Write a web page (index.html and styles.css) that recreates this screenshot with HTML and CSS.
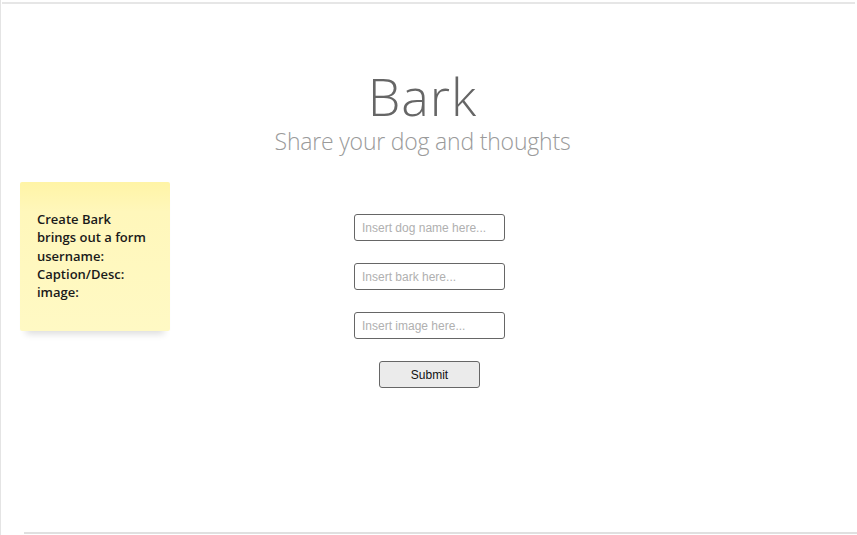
FILE: index.html
```html
<!DOCTYPE html>
<html>
<head>
<meta charset="utf-8">
<link rel="stylesheet" href="styles.css">
</head>
<body>
<div class="frame">
  <div class="note">
    <p>Create Bark<br>brings out a form<br>username:<br>Caption/Desc:<br>image:</p>
  </div>
  <header class="hero">
    <h1 class="title">Bark</h1>
    <p class="subtitle">Share your dog and thoughts</p>
  </header>
  <form class="form">
    <input class="field" type="text" placeholder="Insert dog name here...">
    <input class="field" type="text" placeholder="Insert bark here...">
    <input class="field" type="text" placeholder="Insert image here...">
    <button class="submit" type="button">Submit</button>
  </form>
  <div class="bottom-line"></div>
</div>
</body>
</html>
```

FILE: styles.css
```css
html, body {
  margin: 0;
  padding: 0;
  background: #ffffff;
}
body {
  width: 857px;
  height: 535px;
  overflow: hidden;
  position: relative;
}
.frame {
  position: relative;
  height: 535px;
  border-left: 1px solid #e4e4e4;
  box-sizing: border-box;
}
.frame::before {
  content: "";
  display: block;
  margin-left: 1px;
  margin-right: 2px;
  height: 2px;
  border-top: 2px solid #ffffff;
  background: #e6e6e6;
}
.hero {
  display: flex;
  flex-direction: column;
  align-items: center;
  padding-top: 62px;
  margin-left: -13px;
}
.title {
  margin: 0;
  font-family: "Open Sans", "Lato", sans-serif;
  font-weight: 300;
  font-size: 52px;
  line-height: 60px;
  color: #666666;
  letter-spacing: 1px;
}
.subtitle {
  margin: 0;
  font-family: "Open Sans", "Lato", sans-serif;
  font-weight: 300;
  font-size: 23px;
  line-height: 30px;
  color: #9a9a9a;
  letter-spacing: -0.2px;
}
.form {
  display: flex;
  flex-direction: column;
  align-items: center;
  gap: 22px;
  margin-top: 58px;
  margin-left: 1px;
}
.field {
  width: 151px;
  height: 27px;
  box-sizing: border-box;
  border: 1px solid #666666;
  border-radius: 3px;
  padding: 0 7px;
  font-family: "Liberation Sans", Arial, sans-serif;
  font-size: 12px;
  color: #333;
  background: #fff;
  outline: none;
}
.field::placeholder {
  color: #b0b0b0;
}
.submit {
  width: 101px;
  height: 27px;
  box-sizing: border-box;
  border: 1px solid #666666;
  border-radius: 3px;
  background: #ebebeb;
  font-family: "Liberation Sans", Arial, sans-serif;
  font-size: 12px;
  color: #111;
  padding: 0;
}
.note {
  position: absolute;
  left: 19px;
  top: 182px;
  width: 150px;
  height: 149px;
  box-sizing: border-box;
  padding: 28px 16px 0 17px;
  background: linear-gradient(180deg, #fff4a6 0%, #fff7bb 20%, #fff9c4 100%);
  border-radius: 2px;
  box-shadow: 0 9px 7px -6px rgba(0, 0, 0, 0.14);
}
.note p {
  margin: 0;
  font-family: "Open Sans", sans-serif;
  font-weight: 600;
  font-size: 13px;
  line-height: 18.3px;
  color: #1a1a1a;
}
.bottom-line {
  position: absolute;
  left: 23px;
  right: 0;
  top: 532px;
  height: 2px;
  background: #e0e0e0;
}
```
